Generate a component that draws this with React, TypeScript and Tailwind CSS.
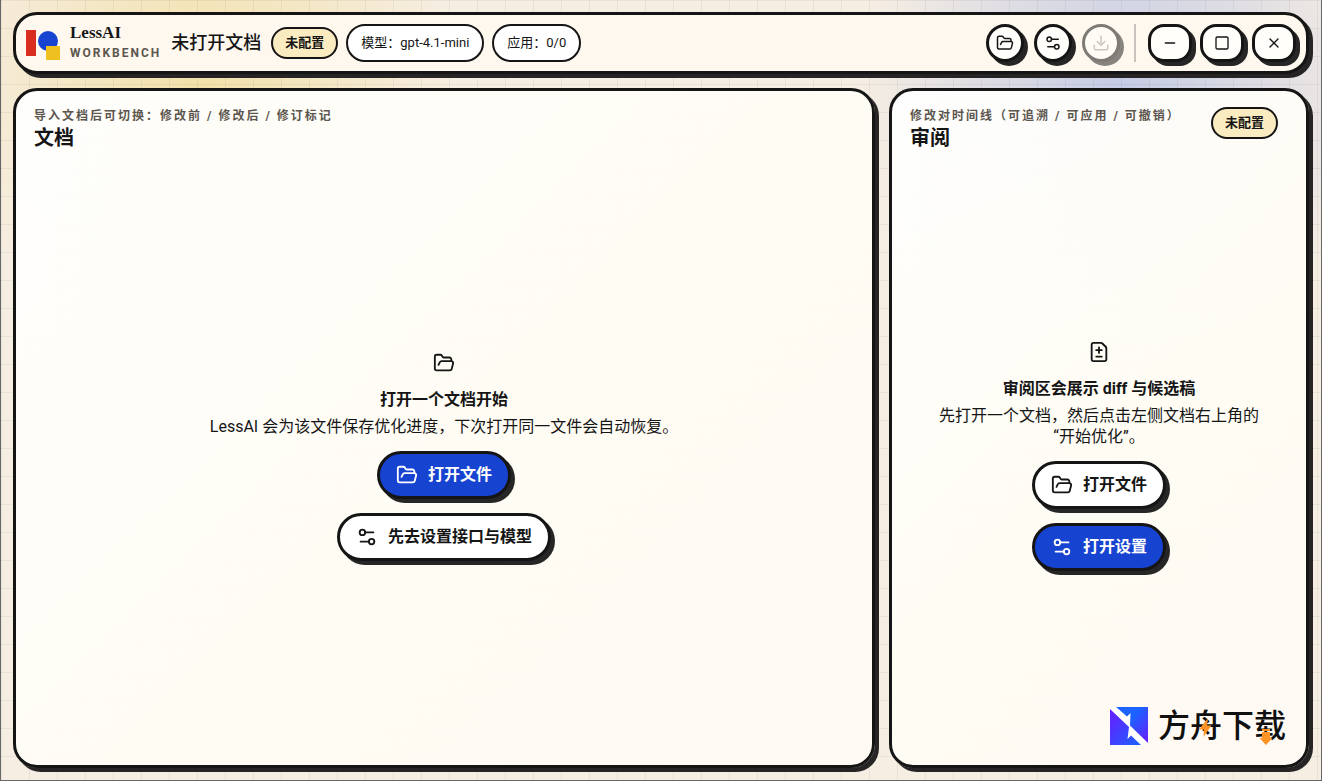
import React from 'react';
import { Download, FileDiff, FolderOpen, Minus, Settings2, Square, X } from 'lucide-react';

const PillButton = ({
  icon,
  primary = false,
  children,
}: {
  icon: React.ReactNode;
  primary?: boolean;
  children: React.ReactNode;
}) => (
  <button
    type="button"
    className={`flex h-12 items-center gap-2.5 rounded-full border-3 border-[#151515] px-4 font-bold shadow-[4px_4px_0_#262626] ${
      primary ? 'bg-[#1743d1] text-white' : 'bg-white text-[#151515]'
    }`}
  >
    {icon}
    <span>{children}</span>
  </button>
);

const RoundButton = ({
  label,
  disabled = false,
  children,
}: {
  label: string;
  disabled?: boolean;
  children: React.ReactNode;
}) => (
  <button
    type="button"
    aria-label={label}
    disabled={disabled}
    className="flex size-[38px] items-center justify-center rounded-full border-3 border-[#151515] bg-[#fffefa] shadow-[4px_4px_0_#262626] disabled:opacity-55"
  >
    {children}
  </button>
);

const WindowButton = ({ label, children }: { label: string; children: React.ReactNode }) => (
  <button
    type="button"
    aria-label={label}
    className="flex h-[38px] w-11 items-center justify-center rounded-2xl border-3 border-[#151515] bg-[#fffefa] shadow-[4px_4px_0_#262626]"
  >
    {children}
  </button>
);

const StatusBadge = () => (
  <span className="flex h-8 shrink-0 items-center rounded-full border-2 border-[#151515] bg-[#faebc0] px-3 text-[13px] font-bold">
    未配置
  </span>
);

const InfoChip = ({ children }: { children: React.ReactNode }) => (
  <span className="flex h-[38px] items-center rounded-full border-2 border-[#151515] bg-white px-[13px] text-[13px]">
    {children}
  </span>
);

const Panel = ({
  hint,
  title,
  badge,
  children,
}: {
  hint: string;
  title: string;
  badge?: React.ReactNode;
  children: React.ReactNode;
}) => (
  <section className="relative flex flex-col rounded-3xl border-3 border-[#151515] bg-linear-135 from-white/95 via-[#fffdf5]/95 to-[#fffaf4]/95 shadow-[4px_4px_0_#262424]">
    <header className="flex items-start justify-between pt-4 pr-7 pl-[18px]">
      <div>
        <p className="text-xs leading-[18px] font-bold tracking-[2px] text-[#5c564e]">{hint}</p>
        <h2 className="font-['Liberation_Serif','Noto_Sans_CJK_SC',serif] text-xl leading-[26px] font-bold">{title}</h2>
      </div>
      {badge}
    </header>
    <div className="flex flex-1 flex-col items-center justify-center px-10 pb-1 text-center">{children}</div>
  </section>
);

const EmptyState = ({
  icon,
  title,
  text,
  children,
}: {
  icon: React.ReactNode;
  title: string;
  text: React.ReactNode;
  children: React.ReactNode;
}) => (
  <>
    {icon}
    <h3 className="mt-3.5 leading-6 font-bold">{title}</h3>
    <p className="mt-1 leading-[21px]">{text}</p>
    <div className="mt-3.5 flex flex-col items-center gap-3.5">{children}</div>
  </>
);

const Logo = () => (
  <svg width="34" height="34" viewBox="0 0 34 34" aria-hidden="true">
    <rect y="4" width="10" height="26" fill="#d92d20" />
    <circle cx="22" cy="15" r="10" fill="#1743d1" />
    <rect x="20" y="20" width="14" height="14" fill="#efc120" />
  </svg>
);

const Watermark = () => (
  <div className="absolute right-5 bottom-5 flex items-center gap-2.5">
    <svg width="38" height="38" viewBox="0 0 38 38" aria-hidden="true">
      <defs>
        <linearGradient id="upper" x1="0" y1="0" x2="1" y2="1">
          <stop offset="0.4" stopColor="#1b62ff" />
          <stop offset="1" stopColor="#6a1cff" />
        </linearGradient>
        <linearGradient id="lower" x1="0" y1="0" x2="1" y2="1">
          <stop offset="0" stopColor="#6a1cff" />
          <stop offset="1" stopColor="#1b62ff" />
        </linearGradient>
      </defs>
      <rect width="38" height="38" fill="#fff" />
      <path d="M6 0H38V36L20 18.5L20.5 6L17 9.5Z" fill="url(#upper)" />
      <path d="M0 2L19 20L17.5 32L21 28.5L31 38H0Z" fill="url(#lower)" />
    </svg>
    <span className="relative text-[32px] leading-[38px] font-medium text-[#101010]">
      方舟下载
      <svg className="absolute top-0 left-0" width="128" height="38" viewBox="0 0 128 38" aria-hidden="true">
        <path d="M50 11L41 22.5H46L45.5 30L53.5 18.500H49Z" fill="#ff9326" />
        <path d="M104 22H112V24H104ZM104 25H112V31H114.5L108 38L101.5 31H104Z" fill="#ff9326" />
      </svg>
    </span>
  </div>
);

export default function App() {
  return (
    <div
      lang="zh-CN"
      className="flex min-h-screen flex-col gap-3.5 border border-t-0 border-[#686868] bg-[#f6eee3] bg-[linear-gradient(#0000000d_1px,transparent_1px),linear-gradient(90deg,#0000000d_1px,transparent_1px),radial-gradient(circle_at_15%_11%,#f0d67a8c,transparent_20%),radial-gradient(circle_at_85%_11%,#a5b4e699,transparent_20%)] bg-size-[28px_28px,28px_28px,auto,auto] p-3 font-[Roboto,'Noto_Sans_CJK_SC',sans-serif] text-base text-[#151515]"
    >
      <header className="flex h-[62px] items-center justify-between rounded-3xl border-3 border-[#151515] bg-[#fff8ef] px-2.5 shadow-[4px_4px_0_#262424]">
        <div className="flex items-center gap-2">
          <div className="flex items-center gap-2.5">
            <Logo />
            <div>
              <div className="font-['Liberation_Serif',serif] text-[17px] leading-5 font-bold">LessAI</div>
              <div className="text-xs leading-5 font-bold tracking-[2px] text-[#5c564e]">WORKBENCH</div>
            </div>
          </div>
          <h1 className="mx-0.5 text-lg font-medium">未打开文档</h1>
          <StatusBadge />
          <InfoChip>模型：gpt-4.1-mini</InfoChip>
          <InfoChip>应用：0/0</InfoChip>
        </div>
        <div className="flex items-center gap-3">
          <div className="mr-0.5 flex gap-2.5">
            <RoundButton label="打开文件">
              <FolderOpen size={18} />
            </RoundButton>
            <RoundButton label="设置">
              <Settings2 size={18} />
            </RoundButton>
            <RoundButton label="导出" disabled>
              <Download size={18} className="opacity-40" />
            </RoundButton>
          </div>
          <div className="h-[38px] w-0.5 bg-[#c8c3bc]" />
          <div className="flex gap-2">
            <WindowButton label="最小化">
              <Minus size={16} />
            </WindowButton>
            <WindowButton label="最大化">
              <Square size={16} />
            </WindowButton>
            <WindowButton label="关闭">
              <X size={16} />
            </WindowButton>
          </div>
        </div>
      </header>

      <main className="grid flex-1 grid-cols-[minmax(0,1fr)_420px] gap-3.5">
        <Panel hint="导入文档后可切换：修改前 / 修改后 / 修订标记" title="文档">
          <EmptyState
            icon={<FolderOpen size={22} />}
            title="打开一个文档开始"
            text="LessAI 会为该文件保存优化进度，下次打开同一文件会自动恢复。"
          >
            <PillButton primary icon={<FolderOpen size={22} />}>
              打开文件
            </PillButton>
            <PillButton icon={<Settings2 size={22} />}>先去设置接口与模型</PillButton>
          </EmptyState>
        </Panel>

        <Panel hint="修改对时间线（可追溯 / 可应用 / 可撤销）" title="审阅" badge={<StatusBadge />}>
          <EmptyState
            icon={<FileDiff size={22} />}
            title="审阅区会展示 diff 与候选稿"
            text={
              <>
                先打开一个文档，然后点击左侧文档右上角的
                <span className="inline-block">“开始优化”。</span>
              </>
            }
          >
            <PillButton icon={<FolderOpen size={22} />}>打开文件</PillButton>
            <PillButton primary icon={<Settings2 size={22} />}>
              打开设置
            </PillButton>
          </EmptyState>
          <Watermark />
        </Panel>
      </main>
    </div>
  );
}
